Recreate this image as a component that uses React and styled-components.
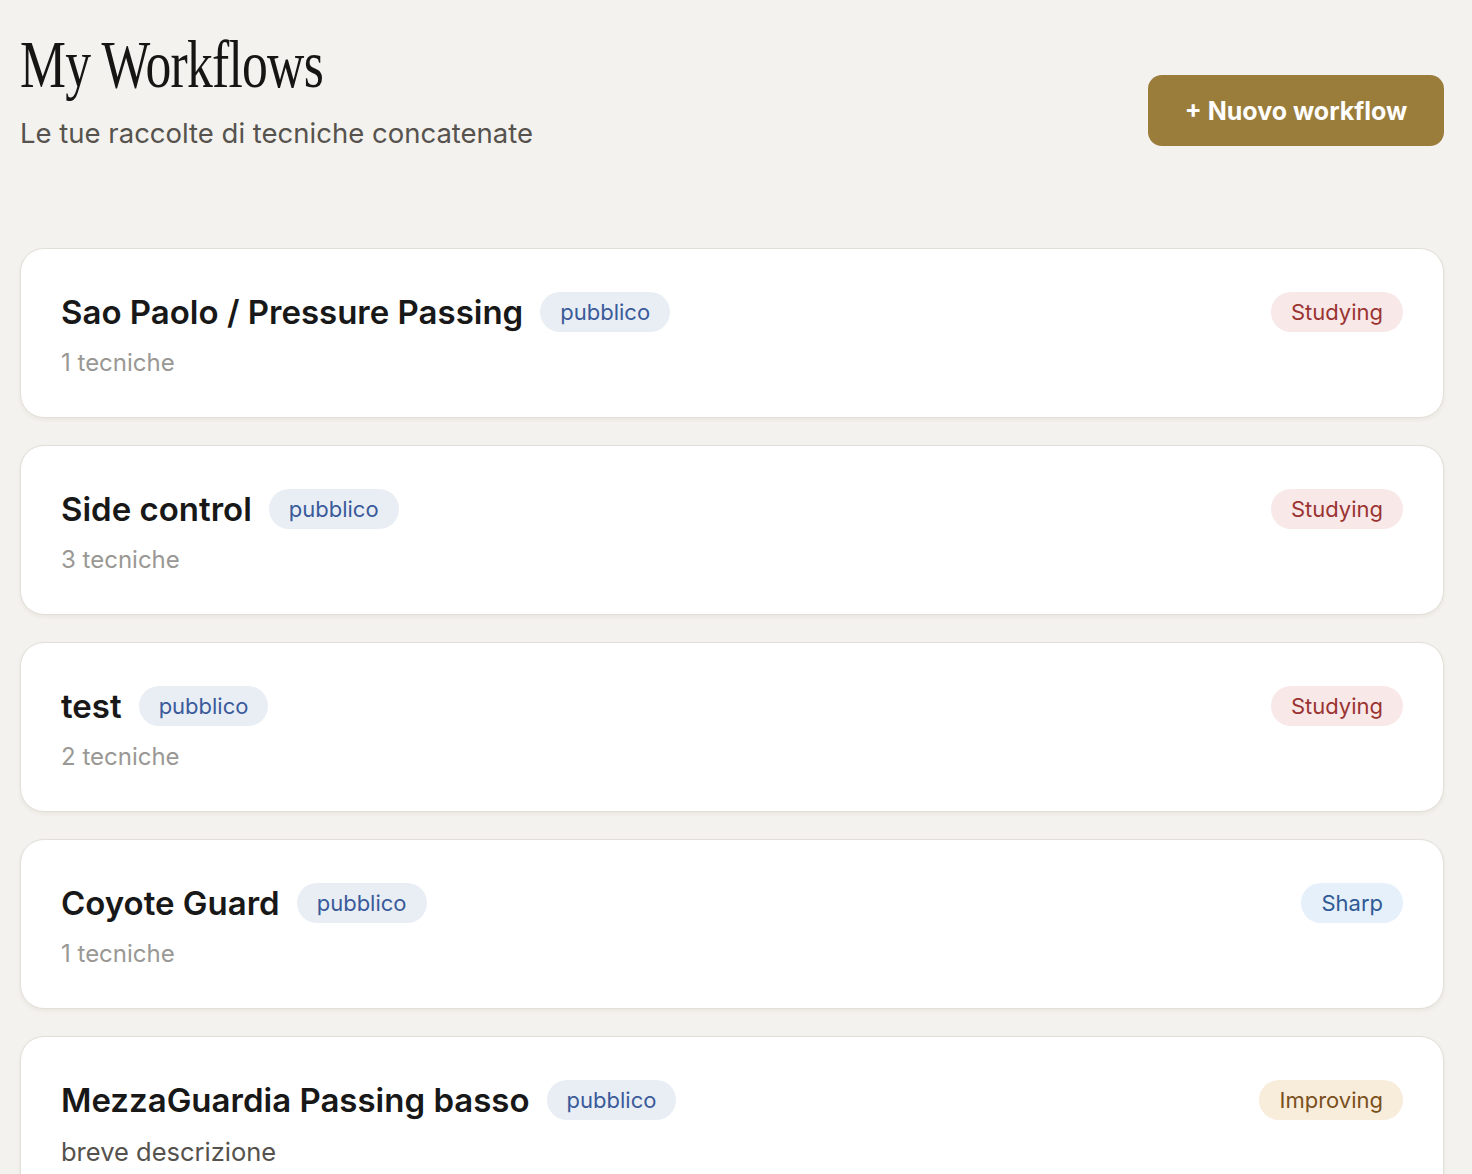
import styled, { createGlobalStyle } from "styled-components";

const GlobalStyle = createGlobalStyle`
  html, body {
    margin: 0;
    padding: 0;
    background: #f4f2ee;
  }

  body {
    font-family: "Inter", "Noto Sans", sans-serif;
    color: #1a1a1a;
  }
`;

const Page = styled.div`
  padding: 26px 28px 0 20px;
  display: flex;
  flex-direction: column;
  gap: 100px;
`;

const Header = styled.header`
  display: flex;
  justify-content: space-between;
  align-items: flex-start;
`;

const TitleBlock = styled.div`
  display: flex;
  flex-direction: column;
`;

const PageTitle = styled.h1`
  margin: 0;
  font-family: "Liberation Serif", "DejaVu Serif", serif;
  font-weight: 400;
  font-size: 68px;
  line-height: 76px;
  letter-spacing: -1px;
  color: #161513;
  transform: scaleX(0.76);
  transform-origin: left center;
  white-space: nowrap;
`;

const Subtitle = styled.p`
  margin: 16px 0 0;
  font-size: 27.5px;
  line-height: 30px;
  color: #56534e;
`;

const NewButton = styled.button`
  margin-top: 49px;
  width: 296px;
  height: 71px;
  border: none;
  border-radius: 14px;
  background: #9a7d3b;
  color: #fff;
  font-family: inherit;
  font-size: 25px;
  font-weight: 700;
  cursor: pointer;
`;

const List = styled.div`
  display: flex;
  flex-direction: column;
  gap: 27px;
`;

const Card = styled.div`
  height: 170px;
  box-sizing: border-box;
  padding: 43px 40px 0 40px;
  background: #fff;
  border: 1.5px solid #e2dfd8;
  border-radius: 24px;
  box-shadow: 0 2px 4px rgba(60, 50, 30, 0.06);
  display: flex;
  justify-content: space-between;
  align-items: flex-start;
`;

const CardMain = styled.div`
  display: flex;
  flex-direction: column;
  gap: 16px;
`;

const TitleRow = styled.div`
  display: flex;
  align-items: center;
  gap: 17px;
`;

const CardTitle = styled.h2`
  margin: 0;
  font-size: 33px;
  font-weight: 600;
  color: #181818;
`;

const Pill = styled.span`
  display: inline-flex;
  align-items: center;
  height: 40px;
  padding: 0 20px;
  border-radius: 20px;
  font-size: 22px;
  background: ${(p) => p.$bg};
  color: ${(p) => p.$fg};
`;

const Meta = styled.p`
  margin: 0;
  font-size: ${(p) => (p.$desc ? "25.5px" : "24px")};
  color: ${(p) => (p.$desc ? "#55524d" : "#9a9894")};
`;

const statusColors = {
  Studying: { bg: "#f9e8e8", fg: "#9a3432" },
  Sharp: { bg: "#e5f0fa", fg: "#2f5a95" },
  Improving: { bg: "#f8ecdb", fg: "#7a501c" },
};

const workflows = [
  { title: "Sao Paolo / Pressure Passing", meta: "1 tecniche", status: "Studying" },
  { title: "Side control", meta: "3 tecniche", status: "Studying" },
  { title: "test", meta: "2 tecniche", status: "Studying" },
  { title: "Coyote Guard", meta: "1 tecniche", status: "Sharp" },
  { title: "MezzaGuardia Passing basso", meta: "breve descrizione", desc: true, status: "Improving" },
];

const App = () => {
  return (
    <>
      <GlobalStyle />
      <Page>
        <Header>
          <TitleBlock>
            <PageTitle>My Workflows</PageTitle>
            <Subtitle>Le tue raccolte di tecniche concatenate</Subtitle>
          </TitleBlock>
          <NewButton>+ Nuovo workflow</NewButton>
        </Header>
        <List>
          {workflows.map((w) => (
            <Card key={w.title}>
              <CardMain>
                <TitleRow>
                  <CardTitle>{w.title}</CardTitle>
                  <Pill $bg="#e9eef5" $fg="#3a5a9a">pubblico</Pill>
                </TitleRow>
                <Meta $desc={w.desc}>{w.meta}</Meta>
              </CardMain>
              <Pill $bg={statusColors[w.status].bg} $fg={statusColors[w.status].fg}>
                {w.status}
              </Pill>
            </Card>
          ))}
        </List>
      </Page>
    </>
  );
};

export default App;
